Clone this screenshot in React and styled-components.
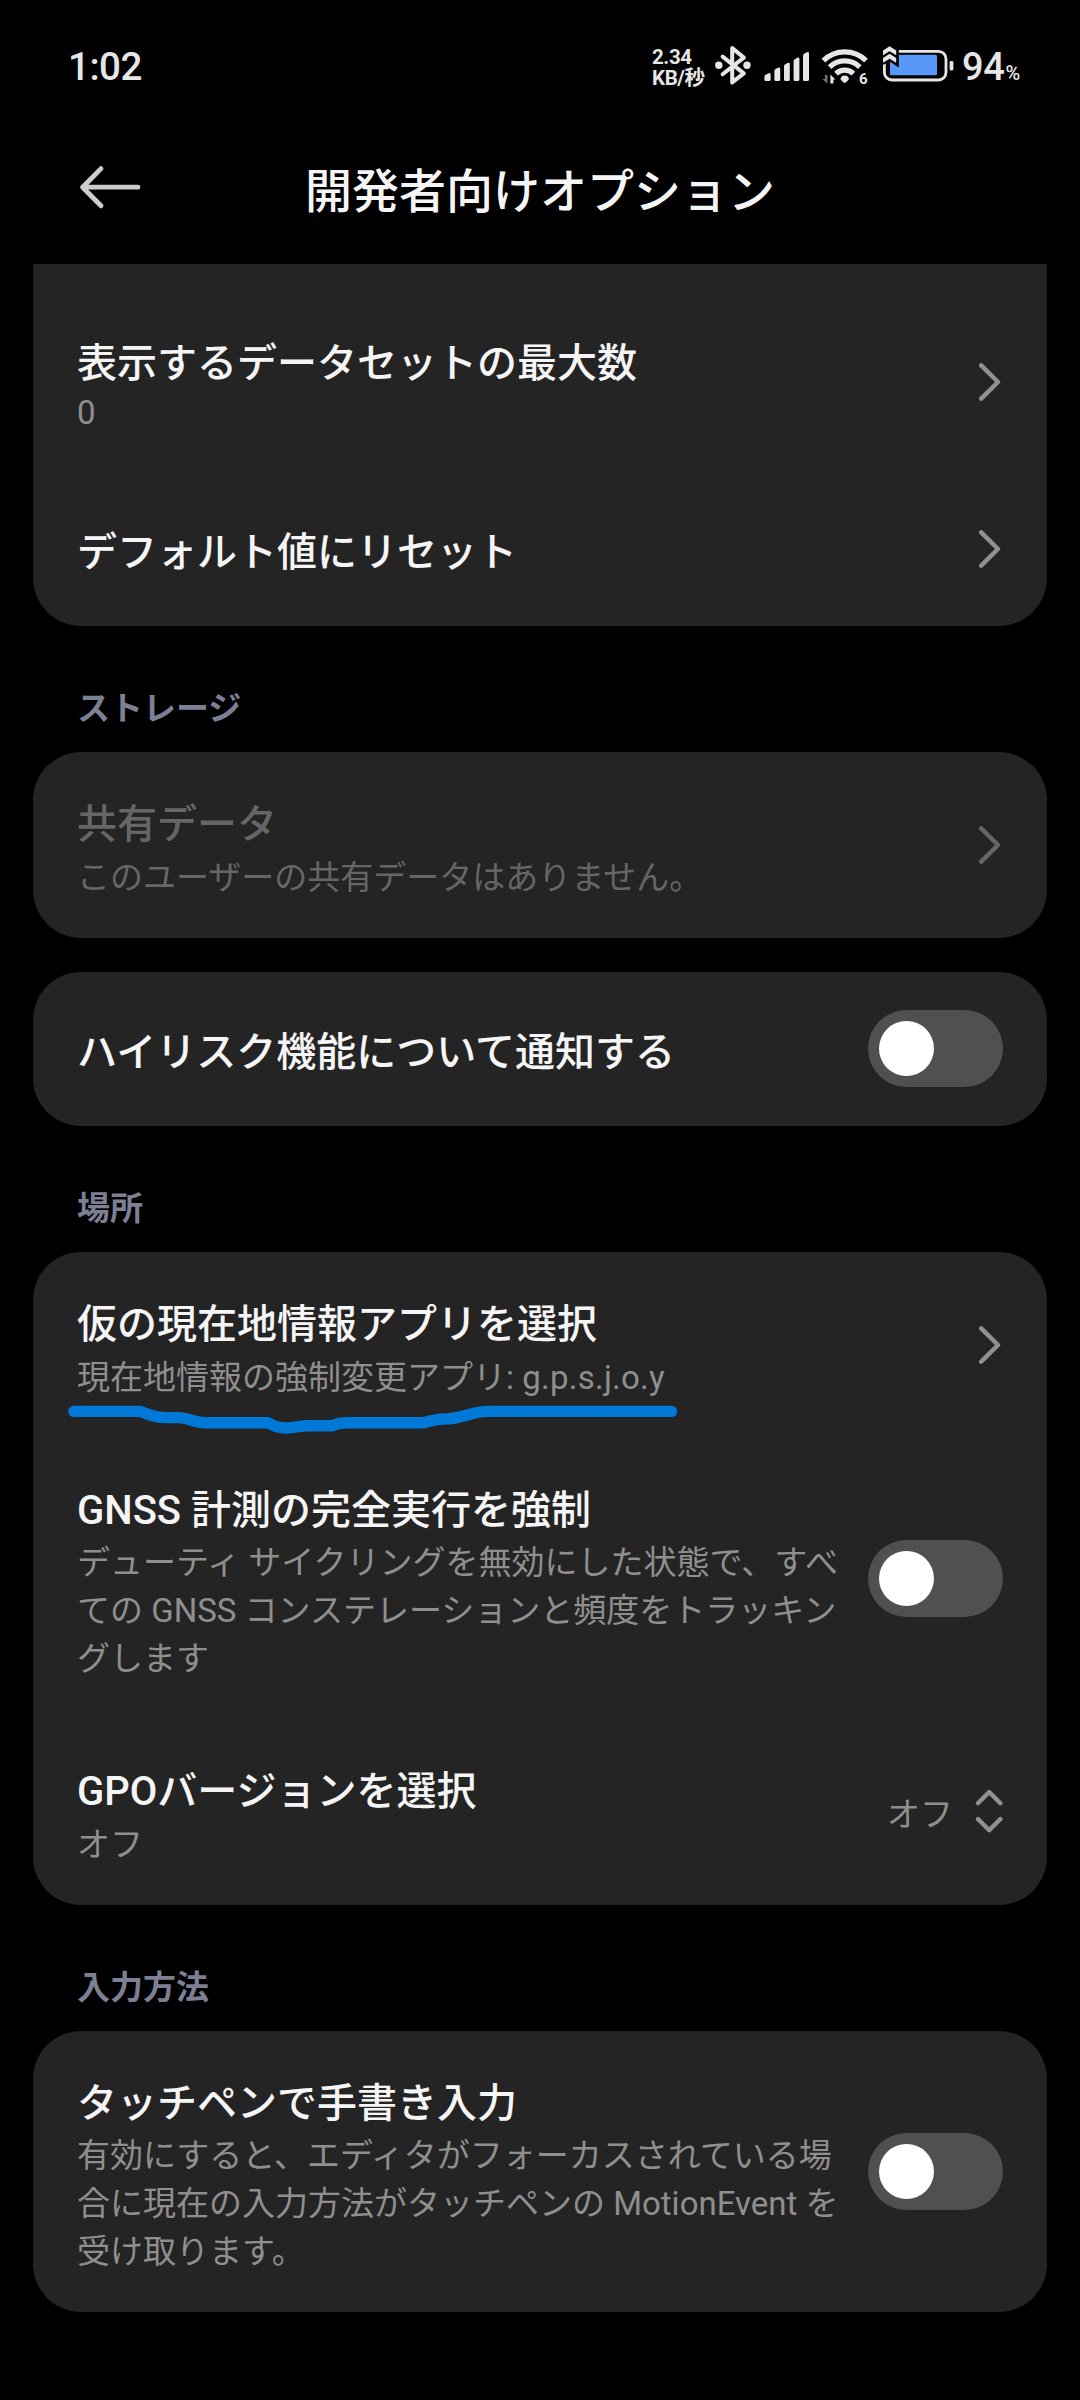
import React, { useState } from 'react'
import styled, { createGlobalStyle } from 'styled-components';

const GlobalStyle = createGlobalStyle`
*{
box-sizing:border-box;
}
body{
margin:0;
background:#000;
font-family:Roboto, "Noto Sans CJK JP", sans-serif;
}
`;

const Container = styled.div`
width:1080px;
height:2400px;
background:#000;
overflow:hidden;
`;

const StatusBar = styled.div`
height:132px;
padding:0 60px 0 68px;
display:flex;
justify-content:space-between;
color:#e6e6e6;
`;

const Clock = styled.span`
padding-top:44px;
font-size:38.5px;
line-height:46px;
font-weight:500;
letter-spacing:-0.5px;
`;

const StatusRight = styled.div`
display:flex;
align-items:flex-start;
`;

const NetSpeed = styled.div`
width:60px;
padding-top:47px;
font-size:20.5px;
line-height:21px;
font-weight:700;
letter-spacing:-0.4px;
white-space:nowrap;
`;

const StatusIcons = styled.svg`
display:block;
width:250px;
height:60px;
margin-top:40px;
`;

const Battery = styled.span`
width:58px;
padding-top:44px;
font-size:38px;
line-height:46px;
font-weight:500;
letter-spacing:-0.3px;
white-space:nowrap;
`;

const Percent = styled.span`
font-size:20px;
margin-left:1px;
`;

const Header = styled.div`
height:132px;
padding:0 77px;
display:grid;
grid-template-columns:66px 1fr 66px;
`;

const BackIcon = styled.svg`
width:66px;
height:60px;
margin-top:25px;
`;

const PageTitle = styled.h1`
margin:0;
padding-top:26px;
text-align:center;
font-size:47px;
line-height:68px;
font-weight:500;
color:#f5f5f5;
white-space:nowrap;
`;

const Card = styled.div`
margin:0 33px ${(props) => props.$gap || 0}px;
padding-top:${(props) => (props.$clipped ? 27 : 0)}px;
border-radius:${(props) => (props.$clipped ? '0 0 48px 48px' : '48px')};
background:#242424;
`;

const SectionTitle = styled.h2`
height:126px;
margin:0;
padding:59px 77px 0;
font-size:33px;
line-height:48px;
font-weight:700;
color:#7d7f95;
`;

const Info = styled.div`
padding-top:7px;
`;

const Row = styled.div`
position:relative;
height:${(props) => props.$height}px;
padding:0 44px;
display:flex;
align-items:center;
justify-content:space-between;
`;

const SingleRow = styled(Row)`
height:154px;
padding-bottom:1px;

${Info}{
padding-top:8px;
}
`;

const Name = styled.div`
font-size:40px;
line-height:58px;
font-weight:500;
white-space:nowrap;
color:${(props) => (props.$disabled ? '#666' : '#f5f5f5')};
`;

const Summary = styled.div`
margin-top:${(props) => (props.$multiline ? -1 : 0)}px;
margin-bottom:-1px;
padding-bottom:${(props) => (props.$latin ? 4 : 0)}px;
font-size:33px;
line-height:${(props) => (props.$latin ? 39 : 48)}px;
white-space:pre;
color:${(props) => (props.$disabled ? '#666' : '#8f8f8f')};
`;

const PackageName = styled.span`
font-kerning:none;
letter-spacing:0.25px;
`;

const Icon = styled.svg`
flex:none;
width:${(props) => props.$width}px;
height:${(props) => props.$height}px;
fill:none;
stroke:${(props) => (props.$disabled ? '#666' : '#919191')};
stroke-width:4.4;
stroke-linecap:round;
stroke-linejoin:round;
`;

const Track = styled.button`
flex:none;
width:135px;
height:77px;
padding:11px;
border:none;
border-radius:39px;
display:flex;
justify-content:${(props) => (props.$on ? 'flex-end' : 'flex-start')};
background:${(props) => (props.$on ? '#0078d7' : '#505050')};
`;

const Knob = styled.span`
width:55px;
height:55px;
border-radius:50%;
background:#fff;
`;

const Choice = styled.div`
display:flex;
align-items:center;
gap:22px;
`;

const ChoiceText = styled.span`
padding-top:6px;
font-size:33px;
line-height:48px;
color:#8f8f8f;
`;

const Marker = styled.svg`
position:absolute;
left:33px;
top:148px;
width:620px;
height:40px;
fill:none;
stroke:#0078d7;
stroke-width:11.4;
stroke-linecap:round;
stroke-linejoin:round;
`;

const Chevron = ({ disabled }) => (
  <Icon $width={24} $height={40} $disabled={disabled} viewBox="0 0 24 40">
    <path d="M2.2 3.4L19 20L2.2 36.6" />
  </Icon>
);

const UpDown = () => (
  <Icon $width={28} $height={46} viewBox="0 0 28 46">
    <path d="M3 14.2L14.2 3L25.4 14.2M3 30L14.2 41.2L25.4 30" />
  </Icon>
);

const Switch = () => {
  const [on, setOn] = useState(false);

  return (
    <Track $on={on} onClick={() => setOn(!on)}>
      <Knob />
    </Track>
  );
};

const Status = () => (
  <StatusBar>
    <Clock>1:02</Clock>
    <StatusRight>
      <NetSpeed>2.34<br />KB/秒</NetSpeed>
      <StatusIcons viewBox="712 40 250 60" fill="#e6e6e6">
        {/* bluetooth */}
        <path d="M722.6 56.6L743.8 73.4L732.2 82.4V48L743.8 57.6L722.6 74.2" fill="none" stroke="#e6e6e6" strokeWidth="4" strokeLinejoin="round" strokeLinecap="round" />
        <circle cx="718.8" cy="65.3" r="3.7" />
        <circle cx="747" cy="65.3" r="3.7" />
        {/* signal */}
        <path d="M764.4 77Q764.4 75.4 766 74.6L769 73.2Q770.6 72.8 770.6 74.4V79.4Q770.6 81 769 81H766Q764.4 81 764.4 79.4Z" />
        <path d="M774.4 71Q774.4 69.6 776 68.8L778.6 67.6Q780.2 67.2 780.2 68.8V79.4Q780.2 81 778.6 81H776Q774.4 81 774.4 79.4Z" />
        <path d="M784 66Q784 64.8 785.6 64L788.2 62.8Q789.8 62.4 789.8 64V79.4Q789.8 81 788.2 81H785.6Q784 81 784 79.4Z" />
        <path d="M793.6 61Q793.6 59.8 795.2 59L797.8 57.6Q799.4 57.2 799.4 58.8V79.4Q799.4 81 797.8 81H795.2Q793.6 81 793.6 79.4Z" />
        <path d="M803 55.4Q803 54.2 804.6 53.4L807.4 52Q809 51.6 809 53.2V79.4Q809 81 807.4 81H804.6Q803 81 803 79.4Z" />
        {/* wifi */}
        <g fill="none" stroke="#e6e6e6" strokeWidth="5.2">
          <path d="M823.4 60.6A30.2 30.2 0 0 1 866 60.6" />
          <path d="M829.6 67.2A21.4 21.4 0 0 1 859.8 67.2" />
          <path d="M836 73.6A12.6 12.6 0 0 1 853.4 73.6" />
        </g>
        <path d="M840.4 79Q841.4 75.6 844.7 75.6Q848 75.6 849 79Q848 81 844.7 83.2Q841.4 81 840.4 79Z" />
        <path d="M827.4 75V83.4L822.4 79H825V75Z" fill="#777" />
        <path d="M830.4 83.4V74.6L835.4 79.4H833.4V83.4Z" />
        <text x="859" y="84" fontSize="15" fontWeight="700" stroke="#000" strokeWidth="3" paintOrder="stroke">6</text>
        {/* battery */}
        <rect x="884.4" y="51.4" width="61.6" height="28.6" rx="7.5" fill="none" stroke="#e6e6e6" strokeWidth="2.8" />
        <rect x="890" y="54.8" width="47" height="20.4" rx="1.5" fill="#5898f8" />
        <rect x="949.6" y="61" width="3.8" height="9.4" rx="1.4" />
        <path d="M881 45H898.8V67.4L889.6 61.6L881 66Z" fill="#000" />
        <path d="M883 50.4L889.6 46.2L896.2 50.4V55.2L889.6 51.2L883 55.2Z" />
        <path d="M883 58L889.6 53.8L896.2 58V62.8L889.6 58.8L883 62.8Z" />
      </StatusIcons>
      <Battery>94<Percent>%</Percent></Battery>
    </StatusRight>
  </StatusBar>
);

const App = () => {
  return (
    <Container>
      <GlobalStyle />
      <Status />
      <Header>
        <BackIcon viewBox="77 157 66 60" fill="none" stroke="#cdcdcd" strokeWidth="4.8" strokeLinecap="round" strokeLinejoin="round">
          <path d="M101 168.6L82.6 187.2L101 205.8M82.6 187.2H138" />
        </BackIcon>
        <PageTitle>開発者向けオプション</PageTitle>
      </Header>

      <Card $clipped>
        <Row $height={181}>
          <Info>
            <Name>表示するデータセットの最大数</Name>
            <Summary $latin>0</Summary>
          </Info>
          <Chevron />
        </Row>
        <SingleRow>
          <Info>
            <Name>デフォルト値にリセット</Name>
          </Info>
          <Chevron />
        </SingleRow>
      </Card>

      <SectionTitle>ストレージ</SectionTitle>
      <Card $gap={34}>
        <Row $height={186}>
          <Info>
            <Name $disabled>共有データ</Name>
            <Summary $disabled>このユーザーの共有データはありません。</Summary>
          </Info>
          <Chevron disabled />
        </Row>
      </Card>
      <Card>
        <SingleRow>
          <Info>
            <Name>ハイリスク機能について通知する</Name>
          </Info>
          <Switch />
        </SingleRow>
      </Card>

      <SectionTitle>場所</SectionTitle>
      <Card>
        <Row $height={186}>
          <Info>
            <Name>仮の現在地情報アプリを選択</Name>
            <Summary>現在地情報の強制変更アプリ: <PackageName>g.p.s.j.o.y</PackageName></Summary>
          </Info>
          <Chevron />
          <Marker viewBox="66 1400 620 40">
            <path d="M74 1411.4H140C148 1414 152 1417.6 165 1417.6H180C190 1418.5 195 1422.6 205 1422.8H268C274 1426 278 1428 287 1428C296 1428 298 1425.8 308 1425.8H332C338 1423.4 340 1422.8 348 1422.8H424C432 1420.4 436 1419 444 1419C464 1419 470 1411.4 488 1411.4H671.5" />
          </Marker>
        </Row>
        <Row $height={281}>
          <Info>
            <Name>GNSS 計測の完全実行を強制</Name>
            <Summary $multiline>
              デューティ サイクリングを無効にした状態で、すべ<br />
              ての GNSS コンステレーションと頻度をトラッキン<br />
              グします
            </Summary>
          </Info>
          <Switch />
        </Row>
        <Row $height={186}>
          <Info>
            <Name>GPOバージョンを選択</Name>
            <Summary>オフ</Summary>
          </Info>
          <Choice>
            <ChoiceText>オフ</ChoiceText>
            <UpDown />
          </Choice>
        </Row>
      </Card>

      <SectionTitle>入力方法</SectionTitle>
      <Card>
        <Row $height={281}>
          <Info>
            <Name>タッチペンで手書き入力</Name>
            <Summary $multiline>
              有効にすると、エディタがフォーカスされている場<br />
              合に現在の入力方法がタッチペンの MotionEvent を<br />
              受け取ります。
            </Summary>
          </Info>
          <Switch />
        </Row>
      </Card>
    </Container>
  );
};

export default App;
